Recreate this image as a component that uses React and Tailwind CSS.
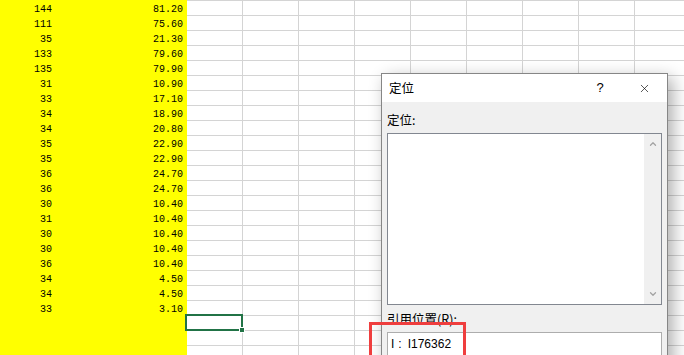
import { X, ChevronUp, ChevronDown } from 'lucide-react'

const ROWS = [
  ['144', '81.20'],
  ['111', '75.60'],
  ['35', '21.30'],
  ['133', '79.60'],
  ['135', '79.90'],
  ['31', '10.90'],
  ['33', '17.10'],
  ['34', '18.90'],
  ['34', '20.80'],
  ['35', '22.90'],
  ['35', '22.90'],
  ['36', '24.70'],
  ['36', '24.70'],
  ['30', '10.40'],
  ['31', '10.40'],
  ['30', '10.40'],
  ['30', '10.40'],
  ['36', '10.40'],
  ['34', '4.50'],
  ['34', '4.50'],
  ['33', '3.10'],
]

const ROW_COUNT = 24
const COL_COUNT = 9

const numFont = { fontFamily: '"Liberation Mono", "DejaVu Sans Mono", monospace' }
const uiFont = { fontFamily: '"Noto Sans CJK SC", "Noto Sans", sans-serif' }

function YellowColumn() {
  const rows = Array.from({ length: ROW_COUNT }, (_, i) => ROWS[i] || ['', ''])
  return (
    <div className="w-[187px] shrink-0 bg-[#ffff00] flex flex-col text-[10px] text-black" style={numFont}>
      {rows.map(([a, b], i) => (
        <div key={i} className="h-[15px] shrink-0 flex items-end leading-[10px]">
          <div className="w-[56px] text-right pr-[4px]">{a}</div>
          <div className="w-[131px] text-right pr-[4px]">{b}</div>
        </div>
      ))}
    </div>
  )
}

function Grid() {
  return (
    <div className="flex-1 flex flex-col">
      {Array.from({ length: ROW_COUNT }, (_, r) => (
        <div key={r} className="h-[15px] shrink-0 flex border-t border-[#d4d4d4]">
          {Array.from({ length: COL_COUNT }, (_, c) => (
            <div key={c} className="w-[56px] h-full shrink-0 border-r border-[#d4d4d4]" />
          ))}
        </div>
      ))}
    </div>
  )
}

function GotoDialog() {
  return (
    <div
      className="absolute left-[381px] top-[73px] w-[287px] h-[300px] border border-[#868686] bg-[#f0f0f0] flex flex-col shadow-[5px_5px_16px_rgba(0,0,0,0.32)] text-[12px] text-black"
      style={uiFont}
    >
      <div className="h-[28px] bg-white flex items-center pl-[7px] shrink-0">
        <span className="flex-1 pt-[1px] text-[12.5px]">定位</span>
        <span className="w-[20px] text-center text-[13px] mr-[28px]" style={{ fontFamily: '"Liberation Sans", sans-serif' }}>?</span>
        <X className="w-[13px] h-[13px] mr-[16px]" strokeWidth={1.2} />
      </div>
      <div className="flex flex-col px-[5px] pt-[10px]">
        <div className="leading-[16px] text-[12.5px]">定位:</div>
        <div className="mt-[5px] h-[172px] border border-[#828790] bg-white flex">
          <div className="flex-1" />
          <div className="w-[17px] bg-[#f0f0f0] flex flex-col items-center justify-between py-[5px]">
            <ChevronUp className="w-[10px] h-[10px] text-[#a3a3a3]" strokeWidth={3} />
            <ChevronDown className="w-[10px] h-[10px] text-[#a3a3a3]" strokeWidth={3} />
          </div>
        </div>
        <div className="mt-[6px] leading-[16px] text-[12.5px]">引用位置(R):</div>
        <div
          className="mt-[5px] h-[24px] border border-[#adadad] bg-white flex items-center pl-[3px] text-[12px]"
          style={{ fontFamily: '"Liberation Sans", Arial, sans-serif' }}
        >
          <span>I</span>
          <span className="ml-[4px]">:</span>
          <span className="ml-[6px]">I176362</span>
        </div>
      </div>
    </div>
  )
}

export default function App() {
  return (
    <div className="relative w-[684px] h-[355px] overflow-hidden bg-white flex">
      <YellowColumn />
      <Grid />

      {/* active cell */}
      <div className="absolute left-[185px] top-[314px] w-[58px] h-[17px] border-2 border-[#217346]" />
      <div className="absolute left-[239px] top-[327px] w-[6px] h-[6px] bg-[#217346] border border-white" />

      <GotoDialog />

      {/* red annotation box */}
      <div className="absolute left-[369px] top-[322px] w-[97px] h-[45px] border-[3px] border-[#ef3e3e]" />
    </div>
  )
}
